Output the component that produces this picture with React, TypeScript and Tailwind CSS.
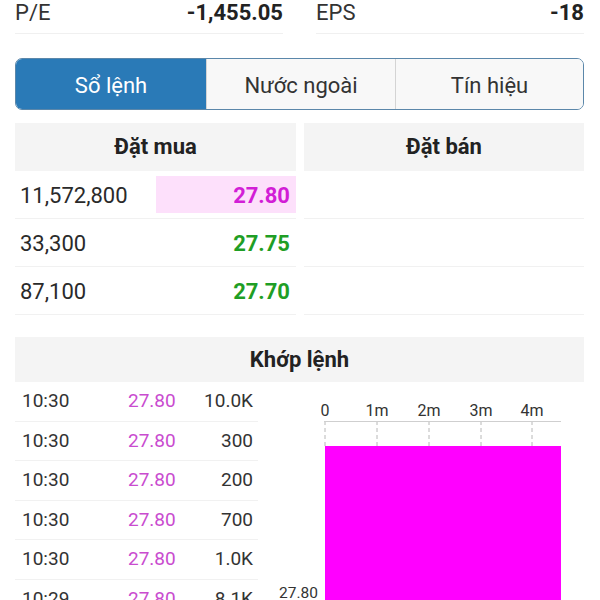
import { useState } from 'react'

const bids = [
  { vol: '11,572,800', price: '27.80', color: 'text-[#d21ed6]', hl: true },
  { vol: '33,300', price: '27.75', color: 'text-[#1f9e25]', hl: false },
  { vol: '87,100', price: '27.70', color: 'text-[#1f9e25]', hl: false },
]

const trades = [
  { t: '10:30', p: '27.80', v: '10.0K' },
  { t: '10:30', p: '27.80', v: '300' },
  { t: '10:30', p: '27.80', v: '200' },
  { t: '10:30', p: '27.80', v: '700' },
  { t: '10:30', p: '27.80', v: '1.0K' },
  { t: '10:29', p: '27.80', v: '8.1K' },
]

const tabs = ['Sổ lệnh', 'Nước ngoài', 'Tín hiệu']

function VolumeChart() {
  const ticks = [
    { x: 67, label: '0' },
    { x: 119, label: '1m' },
    { x: 171, label: '2m' },
    { x: 223, label: '3m' },
    { x: 274, label: '4m' },
  ]
  return (
    <svg width="327" height="218" className="block shrink-0" style={{ fontFamily: 'Roboto, sans-serif' }}>
      {ticks.map((t) => (
        <g key={t.label}>
          <text x={t.x} y="34" fontSize="16" fill="#333" textAnchor="middle">
            {t.label}
          </text>
          <line x1={t.x} y1="39" x2={t.x} y2="64" stroke="#b8b8b8" strokeWidth="1" strokeDasharray="4 3" />
        </g>
      ))}
      <line x1="66" y1="39.5" x2="303" y2="39.5" stroke="#cfcfcf" strokeWidth="1" />
      <rect x="67" y="64" width="236" height="160" fill="#ff00ff" />
      <text x="60" y="216" fontSize="15.5" fill="#333" textAnchor="end">
        27.80
      </text>
    </svg>
  )
}

export default function App() {
  const [tab, setTab] = useState(0)

  return (
    <div className="h-[600px] w-[600px] overflow-hidden bg-white font-['Roboto',sans-serif] text-[#222]">
      <div className="px-[15px]">
        <div className="grid grid-cols-2 gap-[33px] pr-[1px]">
          <div className="flex items-center justify-between border-b border-[#f0f0f0] pb-[8px] pt-[1px] text-[22px] leading-[24px]">
            <span className="text-[#333]">P/E</span>
            <span className="font-bold">-1,455.05</span>
          </div>
          <div className="flex items-center justify-between border-b border-[#f0f0f0] pb-[8px] pt-[1px] text-[22px] leading-[24px]">
            <span className="text-[#333]">EPS</span>
            <span className="font-bold">-18</span>
          </div>
        </div>

        <div className="mt-[24px] grid h-[52px] w-[569px] grid-cols-[190px_189px_1fr] overflow-hidden rounded-[7px] border-[1.5px] border-[#5b87aa] text-[22px] leading-[26px]">
          {tabs.map((label, i) => (
            <button
              key={label}
              onClick={() => setTab(i)}
              className={
                i === tab
                  ? 'flex items-center justify-center bg-[#2a7ab7] pt-[4px] text-white'
                  : 'flex items-center justify-center border-l border-[#d4d4d4] bg-[#f8f8f8] pt-[4px] text-[#333]'
              }
            >
              {label}
            </button>
          ))}
        </div>

        <div className="mt-[13px] grid w-[569px] grid-cols-[281px_280px] gap-[8px] text-[22px] leading-[26px]">
          <div>
            <div className="flex h-[48px] items-center justify-center bg-[#f4f4f4] font-bold">Đặt mua</div>
            {bids.map((b) => (
              <div key={b.vol} className="grid h-[48px] grid-cols-2 border-b border-[#f1f1f1]">
                <div className="flex items-center pl-[5px] pt-[3px] text-[#2a2a2a]">{b.vol}</div>
                <div
                  className={`my-[5px] flex items-center justify-end pr-[6px] pt-[3px] font-bold ${b.color} ${
                    b.hl ? 'bg-[#fde0fb]' : ''
                  }`}
                >
                  {b.price}
                </div>
              </div>
            ))}
          </div>
          <div>
            <div className="flex h-[48px] items-center justify-center bg-[#f4f4f4] font-bold">Đặt bán</div>
            {bids.map((b) => (
              <div key={b.vol} className="h-[48px] border-b border-[#f1f1f1]" />
            ))}
          </div>
        </div>

        <div className="mt-[22px] flex h-[45px] w-[569px] items-center justify-center bg-[#f4f4f4] pt-[1px] text-[22px] font-bold leading-[26px]">
          Khớp lệnh
        </div>

        <div className="flex">
          <div className="w-[243px] shrink-0">
            {trades.map((r, i) => (
              <div
                key={i}
                className="grid h-[39.5px] grid-cols-[80px_1fr_1fr] items-center border-b border-[#f1f1f1] pl-[7px] pr-[5px] text-[19px] leading-[22px]"
              >
                <span className="text-[#333]">{r.t}</span>
                <span className="pl-[26px] text-[#c94ccf]">{r.p}</span>
                <span className="text-right text-[#333]">{r.v}</span>
              </div>
            ))}
          </div>
          <VolumeChart />
        </div>
      </div>
    </div>
  )
}
